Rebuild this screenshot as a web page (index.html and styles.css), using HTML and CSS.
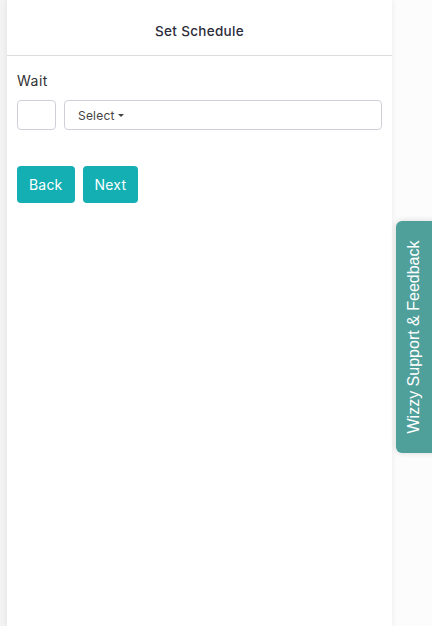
FILE: index.html
```html
<!DOCTYPE html>
<html>
<head>
<meta charset="utf-8">
<link rel="stylesheet" href="styles.css">
</head>
<body>
<div class="page">
  <div class="panel">
    <div class="header">Set Schedule</div>
    <div class="body">
      <label class="label">Wait</label>
      <div class="row">
        <input class="num" type="text">
        <button class="select">Select <span class="caret"></span></button>
      </div>
      <div class="actions">
        <button class="btn">Back</button>
        <button class="btn">Next</button>
      </div>
    </div>
  </div>
</div>
<div class="feedback"><span>Wizzy Support &amp; Feedback</span></div>
</body>
</html>
```
FILE: styles.css
```css
html, body { margin: 0; padding: 0; height: 100%; }
body {
  background: #fcfcfc;
  font-family: Inter, "Open Sans", sans-serif;
  color: #212529;
  overflow: hidden;
}
.page {
  height: 100%;
  display: flex;
  background: linear-gradient(to right, #f3f3f3 0, #f3f3f3 7px, #fcfcfc 7px);
}
.panel {
  margin-left: 7px;
  width: 385px;
  height: 100%;
  background: #fff;
  box-shadow: 0 0 6px rgba(0,0,0,0.08);
}
.header {
  height: 56px;
  box-sizing: border-box;
  border-bottom: 1px solid #dcdde0;
  display: flex;
  align-items: center;
  justify-content: center;
  font-size: 13.5px;
  font-weight: 500;
  letter-spacing: 0.3px;
  color: #2c2c3a;
  padding-top: 7px;
}
.body { padding: 15px 10px 0 10px; }
.label {
  display: block;
  font-size: 14px;
  letter-spacing: 0.5px;
  color: #333;
  line-height: 20px;
  margin-bottom: 9px;
}
.row { display: flex; gap: 8px; }
.num {
  width: 39px;
  height: 30px;
  box-sizing: border-box;
  border: 1px solid #ced2d8;
  border-radius: 4px;
  padding: 0;
  margin: 0;
  background: #fff;
}
.select {
  flex: 1;
  height: 30px;
  box-sizing: border-box;
  border: 1px solid #ced2d8;
  border-radius: 4px;
  background: #fff;
  text-align: left;
  padding: 0 0 0 13px;
  font-family: inherit;
  font-size: 12px;
  letter-spacing: 0.2px;
  color: #444;
  display: flex;
  align-items: center;
  gap: 3px;
  margin: 0;
}
.caret {
  width: 0; height: 0;
  border-left: 3px solid transparent;
  border-right: 3px solid transparent;
  border-top: 3px solid #444;
}
.actions { display: flex; gap: 8px; margin-top: 36px; }
.btn {
  height: 37px;
  box-sizing: border-box;
  padding: 0 12px;
  background: #14afb3;
  border: none;
  border-radius: 4px;
  color: #fff;
  font-family: inherit;
  font-size: 14px;
  font-weight: 400;
  letter-spacing: 0.2px;
  margin: 0;
}
.feedback {
  position: absolute;
  left: 396px;
  top: 221px;
  width: 40px;
  height: 232px;
  background: #4f9f9b;
  border-radius: 6px 0 0 6px;
  box-shadow: 0 0 6px rgba(0,0,0,0.15);
  display: flex;
  align-items: center;
  justify-content: center;
}
.feedback span {
  transform: rotate(-90deg);
  white-space: nowrap;
  font-family: "Liberation Sans", Arial, sans-serif;
  font-size: 16px;
  color: #fff;
  margin-left: -4px;
}
```
